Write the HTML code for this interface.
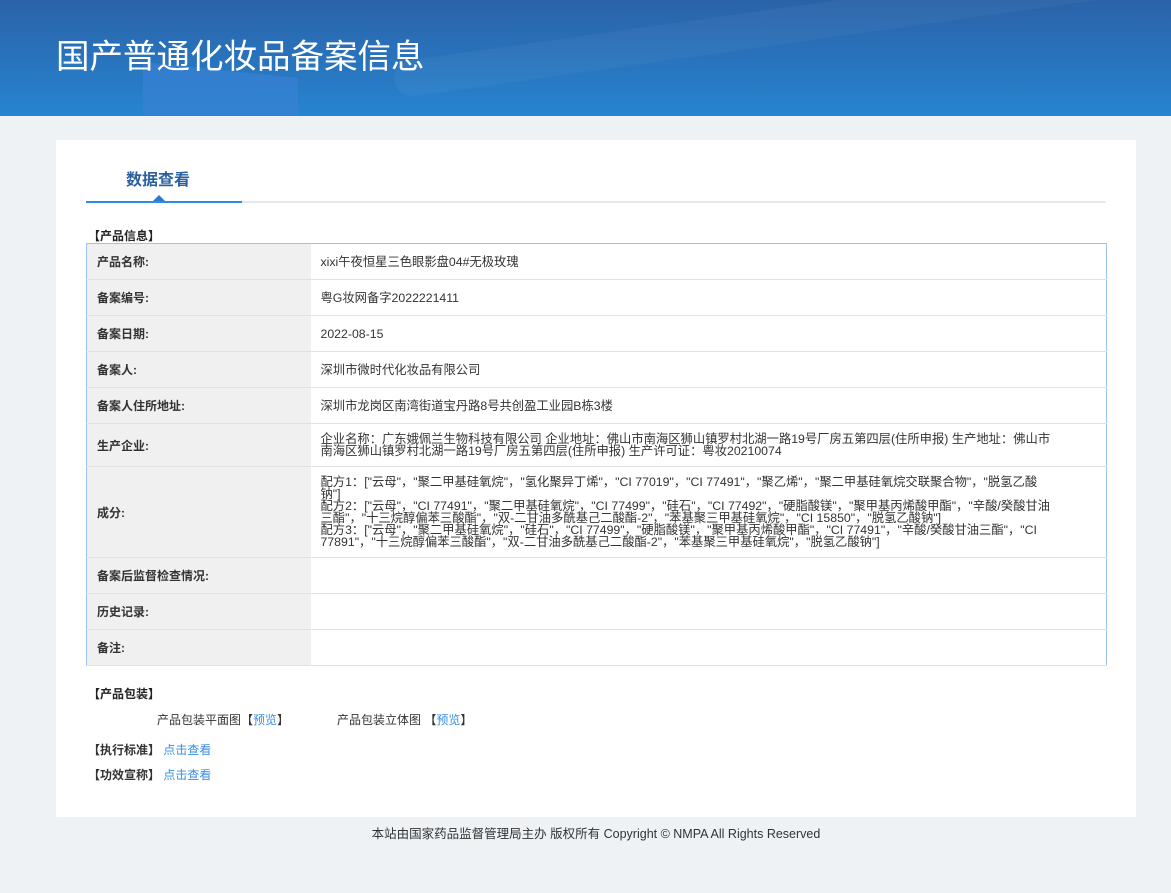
<!DOCTYPE html>
<html><head><meta charset="utf-8"><style>
*{margin:0;padding:0;box-sizing:border-box}
body{width:1171px;height:893px;background:#eff2f5;font-family:"Liberation Sans","Noto Sans CJK SC",sans-serif;font-size:12px;color:#333;position:relative;overflow:hidden}
.hd{position:absolute;left:0;top:0;width:1171px;height:116px;background:linear-gradient(180deg,#2a62a8 0%,#2784d0 100%);overflow:hidden}
.hd .s1{position:absolute;left:143px;top:70px;width:155px;height:60px;background:#3a82d6;transform:skewY(6deg);opacity:.6}
.hd .s2{position:absolute;left:390px;top:0px;width:900px;height:36px;border-radius:18px;background:rgba(255,255,255,.04);transform:rotate(-8deg)}
.hd h1{position:absolute;left:56px;top:29px;font-size:33.5px;font-weight:normal;color:#fff}
.card{position:absolute;left:56px;top:140px;width:1080px;height:677px;background:#fff}
.tab{position:absolute;left:30px;top:22px;width:156px;height:40px;font-size:16px;font-weight:bold;color:#2a5fa0;padding-left:40px;padding-top:4px}
.line{position:absolute;left:30px;top:61px;width:1020px;height:2px;background:#e5e8ec}
.line2{position:absolute;left:30px;top:61px;width:156px;height:2px;background:#2b8ee0}
.tri{position:absolute;left:97px;top:55px;width:0;height:0;border-left:6px solid transparent;border-right:6px solid transparent;border-bottom:6px solid #2b7ad0}
.sec{position:absolute;font-weight:bold;color:#222;font-size:12px}
table{position:absolute;left:30px;top:103px;width:1021px;border-collapse:collapse;border:1px solid #9bc3ee}
td{border-bottom:1px solid #e2e2e2;font-size:12px;vertical-align:middle}
td.l{width:224px;background:#f0f0f0;font-weight:bold;padding-left:10px;color:#333}
td.v{padding:0 52px 0 10px;color:#333;line-height:12px;font-size:12.3px}
a{color:#3a8ee0;text-decoration:none}
.ft{position:absolute;top:823px;left:0;width:1192px;text-align:center;font-size:12.5px;color:#333}
</style></head><body>
<div class="hd"><div class="s2"></div><div class="s1"></div><h1>国产普通化妆品备案信息</h1></div>
<div class="card">
<div class="tab">数据查看</div>
<div class="line"></div><div class="line2"></div><div class="tri"></div>
<div class="sec" style="left:32px;top:87px">【产品信息】</div>
<table>
<tr style="height:36px"><td class="l">产品名称:</td><td class="v">xixi午夜恒星三色眼影盘04#无极玫瑰</td></tr>
<tr style="height:36px"><td class="l">备案编号:</td><td class="v">粤G妆网备字2022221411</td></tr>
<tr style="height:36px"><td class="l">备案日期:</td><td class="v">2022-08-15</td></tr>
<tr style="height:36px"><td class="l">备案人:</td><td class="v">深圳市微时代化妆品有限公司</td></tr>
<tr style="height:36px"><td class="l">备案人住所地址:</td><td class="v">深圳市龙岗区南湾街道宝丹路8号共创盈工业园B栋3楼</td></tr>
<tr style="height:43px"><td class="l">生产企业:</td><td class="v">企业名称：广东娥佩兰生物科技有限公司 企业地址：佛山市南海区狮山镇罗村北湖一路19号厂房五第四层(住所申报) 生产地址：佛山市南海区狮山镇罗村北湖一路19号厂房五第四层(住所申报) 生产许可证：粤妆20210074</td></tr>
<tr style="height:91px"><td class="l">成分:</td><td class="v">配方1：["云母"，"聚二甲基硅氧烷"，"氢化聚异丁烯"，"CI 77019"，"CI 77491"，"聚乙烯"，"聚二甲基硅氧烷交联聚合物"，"脱氢乙酸钠"]<br>配方2：["云母"，"CI 77491"，"聚二甲基硅氧烷"，"CI 77499"，"硅石"，"CI 77492"，"硬脂酸镁"，"聚甲基丙烯酸甲酯"，"辛酸/癸酸甘油三酯"，"十三烷醇偏苯三酸酯"，"双-二甘油多酰基己二酸酯-2"，"苯基聚三甲基硅氧烷"，"CI 15850"，"脱氢乙酸钠"]<br>配方3：["云母"，"聚二甲基硅氧烷"，"硅石"，"CI 77499"，"硬脂酸镁"，"聚甲基丙烯酸甲酯"，"CI 77491"，"辛酸/癸酸甘油三酯"，"CI 77891"，"十三烷醇偏苯三酸酯"，"双-二甘油多酰基己二酸酯-2"，"苯基聚三甲基硅氧烷"，"脱氢乙酸钠"]</td></tr>
<tr style="height:36px"><td class="l">备案后监督检查情况:</td><td class="v"></td></tr>
<tr style="height:36px"><td class="l">历史记录:</td><td class="v"></td></tr>
<tr style="height:36px"><td class="l">备注:</td><td class="v"></td></tr>
</table>
<div class="sec" style="left:32px;top:545px">【产品包装】</div>
<div style="position:absolute;left:101px;top:571px">产品包装平面图【<a>预览</a>】</div>
<div style="position:absolute;left:281px;top:571px">产品包装立体图 【<a>预览</a>】</div>
<div style="position:absolute;left:32px;top:601px"><b>【执行标准】</b> <a>点击查看</a></div>
<div style="position:absolute;left:32px;top:626px"><b>【功效宣称】</b> <a>点击查看</a></div>
</div>
<div class="ft">本站由国家药品监督管理局主办 版权所有 Copyright © NMPA All Rights Reserved</div>
</body></html>
